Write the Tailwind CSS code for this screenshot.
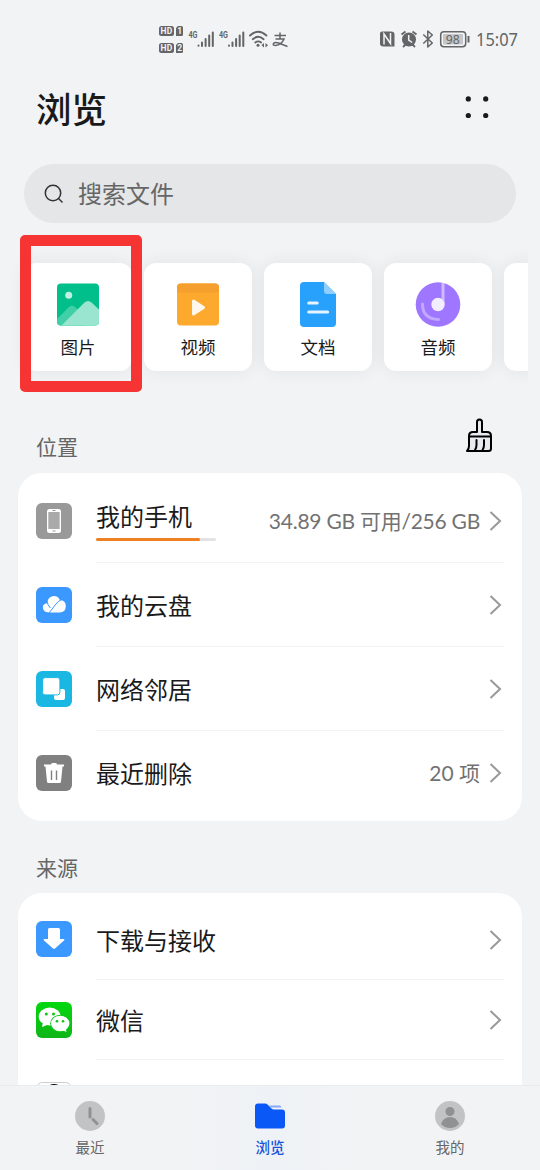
<!DOCTYPE html>
<html lang="zh-CN">
<head>
<meta charset="utf-8">
<title>浏览</title>
<script src="https://cdn.jsdelivr.net/npm/@tailwindcss/browser@4"></script>
</head>
<body class="bg-[#f1f3f5] text-[#1a1a1a] font-['Noto_Sans_CJK_SC',sans-serif]">
<div class="relative flex h-[1170px] w-[540px] flex-col overflow-hidden">

  <!-- Status bar -->
  <div class="flex h-20 shrink-0 justify-between text-[#636567]">
    <svg class="ml-[150px] mt-[15px]" width="150" height="50" viewBox="0 0 150 50" fill="none" stroke="#636567" font-family="Roboto, sans-serif" font-weight="700">
      <g fill="#636567" stroke="none">
        <rect x="9" y="11" width="15" height="10" rx="2.5"/><path d="M28 11h3.500q1.500 0 1.500 1.500v7q0 1.500-1.500 1.500H26v-8z"/>
        <rect x="9" y="28" width="15" height="10" rx="2.5"/><path d="M28 28h3.500q1.500 0 1.500 1.500v7q0 1.500-1.500 1.500H26v-8z"/>
        <g fill="#f1f3f5" font-size="8.5"><text x="10.4" y="19.2" textLength="12">HD</text><text x="27.2" y="19" font-size="8.500">1</text><text x="10.4" y="36.2" textLength="12">HD</text><text x="27.2" y="36" font-size="8.500">2</text></g>
        <g font-size="8.5"><text x="38.5" y="23" textLength="9" lengthAdjust="spacingAndGlyphs">4G</text><text x="69" y="23" textLength="9" lengthAdjust="spacingAndGlyphs">4G</text></g>
      </g>
      <g stroke-width="2" stroke-linecap="round">
        <path d="M48.5 30.5v.3M52 27.5v3.5M55.600 24v7M59.200 20.500v10.500M62.800 17.500v13.500"/>
        <path d="M79 30.500v.3M82.500 27.500v3.500M86.100 24v7M89.700 20.500v10.500M93.300 17.500v13.500"/>
        <path d="M100 20.500q8.200-7.500 16.400 0M102.800 24.200q5.400-4.800 10.800 0M105.300 27.500q2.900-2.200 5.800 0" stroke-width="1.900"/>
      </g>
      <g fill="#636567" stroke="none"><circle cx="108" cy="30.300" r="1.500"/><path d="M114 28v4.500l-2.500-2.200zM115.500 28v4.500l2.500-2.200z"/></g>
      <path d="M124.500 20.500h11.500M130 17.500v6M125.500 24h8.500q-2.500 6-8.500 6.500-3 0-2-2 1.500-1.800 5-.5l9 3.500" stroke-width="1.500"/>
    </svg>
    <svg class="mt-[15px]" width="170" height="50" viewBox="0 0 170 50" fill="none" stroke="#636567" font-family="Noto Sans, sans-serif">
      <path d="M12 16.500h9q3.500 0 3.500 3v12h-11q-3.500 0-3.500-3v-10q0-2 2-2z" fill="#636567" stroke="none"/>
      <path d="M14 29.500v-10.500l6.500 9.500v-10.500" stroke="#f1f3f5" stroke-width="1.500"/>
      <circle cx="39" cy="24.500" r="7" fill="#636567" stroke="none"/>
      <path d="M31.500 19.500l4-3M46.500 19.500l-4-3M33 32l2.500-2.500M45 32l-2.500-2.500" stroke-width="1.800"/>
      <path d="M38.700 20v5l3.500 2.500" stroke="#f1f3f5" stroke-width="1.500"/>
      <path d="M53.300 19.500l9 8.500-4.500 4v-16l4.500 4-9 8.500" stroke-width="1.500" stroke-linejoin="round"/>
      <rect x="70.700" y="16.700" width="25" height="15" rx="3.200" stroke-width="1.500"/>
      <rect x="73" y="19" width="20" height="10.500" rx="1" fill="#c5c6c8" stroke="none"/>
      <path d="M98.500 21v6.500" stroke-width="2"/>
      <g fill="#636567" stroke="none"><text x="75.800" y="28.700" font-size="12.500" textLength="14" lengthAdjust="spacingAndGlyphs">98</text>
      <text x="106" y="31.300" font-size="17.500" textLength="42" lengthAdjust="spacingAndGlyphs">15:07</text></g>
    </svg>
  </div>

  <!-- Title -->
  <header class="flex h-[58px] shrink-0 items-center justify-between pl-9 pr-[50px]">
    <h1 class="-mt-[3px] text-[35.500px] leading-[58px] font-medium">浏览</h1>
    <svg class="-mt-[5px]" width="26" height="26" viewBox="0 0 26 26" fill="#1a1a1a"><circle cx="4.300" cy="4.900" r="2.600"/><circle cx="21.700" cy="4.900" r="2.600"/><circle cx="4.300" cy="21.500" r="2.600"/><circle cx="21.700" cy="21.500" r="2.600"/></svg>
  </header>

  <!-- Search -->
  <div class="mx-6 mt-[26px] flex h-[59px] shrink-0 items-center rounded-full bg-[#e5e6e8] pl-5">
    <svg width="20" height="20" viewBox="0 0 20 20" fill="none" stroke="#333" stroke-width="1.500"><circle cx="9" cy="9" r="7.700"/><path d="M14.500 14.500l4 4"/></svg>
    <span class="-mt-0.5 ml-3.5 text-2xl text-[#666]">搜索文件</span>
  </div>

  <!-- Categories -->
  <div class="mr-3 flex h-[170px] shrink-0 gap-3 overflow-hidden pl-6 pt-10">
    <div class="flex h-[108px] w-[108px] shrink-0 flex-col items-center rounded-xl bg-white pt-[18px] shadow-[0_0_18px_rgba(0,0,0,0.07)]">
      <svg width="48" height="48" viewBox="0 0 48 48"><defs><clipPath id="ph"><rect x="3" y="2.500" width="42" height="42" rx="4"/></clipPath></defs><g clip-path="url(#ph)"><path d="M3 2h42v43H3z" fill="#00bf8a"/><path d="M3 38l12-12q3-2.500 6 0l10 10v9H3z" fill="#40cfa7"/><path d="M7 45l23.500-23.500q3.500-3 7 0L45 28.500V45z" fill="#99e5d0"/><circle cx="14.700" cy="14.300" r="3.500" fill="#bff0e2"/></g></svg>
      <span class="mt-[5px] text-[17.500px] leading-[26px]">图片</span>
    </div>
    <div class="flex h-[108px] w-[108px] shrink-0 flex-col items-center rounded-xl bg-white pt-[18px] shadow-[0_0_18px_rgba(0,0,0,0.07)]">
      <svg width="48" height="48" viewBox="0 0 48 48"><rect x="3" y="2.500" width="42" height="42" rx="4" fill="#fca92e"/><path d="M3 11.500v-5q0-4 4-4h34q4 0 4 4v5z" fill="#f59f2e"/><path d="M19.500 20v13l10-6.500z" fill="#fff7eb" stroke="#fff7eb" stroke-width="3" stroke-linejoin="round"/></svg>
      <span class="mt-[5px] text-[17.500px] leading-[26px]">视频</span>
    </div>
    <div class="flex h-[108px] w-[108px] shrink-0 flex-col items-center rounded-xl bg-white pt-[18px] shadow-[0_0_18px_rgba(0,0,0,0.07)]">
      <svg width="48" height="48" viewBox="0 0 48 48"><path d="M10 1h20l12 12v29q0 4-4 4H10q-4 0-4-4V5q0-4 4-4z" fill="#28a1fd"/><path d="M30 1l12 12h-9q-3 0-3-3z" fill="#8fcefe"/><path d="M14.700 22h8.500M14.700 31h19" stroke="#e5f4ff" stroke-width="3" stroke-linecap="round"/></svg>
      <span class="mt-[5px] text-[17.500px] leading-[26px]">文档</span>
    </div>
    <div class="flex h-[108px] w-[108px] shrink-0 flex-col items-center rounded-xl bg-white pt-[18px] shadow-[0_0_18px_rgba(0,0,0,0.07)]">
      <svg width="48" height="48" viewBox="0 0 48 48" fill="none"><circle cx="24" cy="23.500" r="22.300" fill="#9e76ff"/><path d="M29 2v21" stroke="#cebaff" stroke-width="3"/><circle cx="24" cy="23.500" r="6.700" fill="#f2edff"/><path d="M8.500 23q0 15 16 15.500" stroke="#c2a9ff" stroke-width="3" stroke-linecap="round"/></svg>
      <span class="mt-[5px] text-[17.500px] leading-[26px]">音频</span>
    </div>
    <div class="h-[108px] w-[108px] shrink-0 rounded-xl bg-white shadow-[0_0_18px_rgba(0,0,0,0.07)]"></div>
  </div>
  <div class="absolute left-5 top-[235px] h-[157px] w-[122px] rounded-[5px] border-[11px] border-[#f73434]"></div>

  <!-- Locations -->
  <div class="flex h-20 shrink-0 items-start justify-between pl-9 pr-[47px] pt-[25px]">
    <h2 class="mt-3 text-[21px] leading-8 text-[#666]">位置</h2>
    <svg width="28" height="36" viewBox="0 0 28 36" fill="none" stroke="#000" stroke-width="2" stroke-linejoin="round" stroke-linecap="round"><path d="M12 14V4q0-2.500 2.500-2.500t2.500 2.500v10h5q4 0 4 4v12.500q0 2.500-2.500 2.500H2q2-2 2-5v-10q0-4 4-4h4M4 18.500h22M11.500 22v5q0 3-1.500 5M19 22v5q0 3-1.500 5" fill="#e9eaf0"/></svg>
  </div>
  <section class="mx-[18px] flex shrink-0 flex-col rounded-3xl bg-white px-[18px] py-1.5">
    <div class="flex h-[84px]">
      <svg class="mt-6" width="36" height="36" viewBox="0 0 36 36"><rect width="36" height="36" rx="6" fill="#999"/><rect x="11" y="6" width="14" height="24" rx="2.500" fill="#fff"/><path d="M12.300 9h11.400v17H12.300z" fill="#aaa"/><path d="M16.500 7.500h3M16.500 28h3" stroke="#999"/></svg>
      <div class="ml-6 flex grow border-b border-[#f3f3f3]">
        <div class="pt-5"><p class="-mt-px text-2xl leading-9">我的手机</p><div class="mt-[3.500px] h-[3px] w-[120px] rounded-full bg-[#e3e3e5]"><div class="h-full w-[104px] rounded-full bg-[#f08122]"></div></div></div>
        <span class="ml-auto mt-6 h-9 text-[21px] leading-9 tracking-[-0.25px] text-[#727272] font-[Lato,'Noto_Sans_CJK_SC',sans-serif]">34.89 GB 可用/256 GB</span>
        <svg class="ml-[9px] mr-0.5 mt-8" width="13" height="20" viewBox="0 0 13 20" fill="none" stroke="#999" stroke-width="2"><path d="M1.500 1l9.500 9-9.500 9"/></svg>
      </div>
    </div>
    <div class="flex h-[84px]">
      <svg class="mt-6" width="36" height="36" viewBox="0 0 36 36"><rect width="36" height="36" rx="6" fill="#3a98ff"/><path d="M11.300 16q.5-6.500 6.500-7 4.500 0 6 4 6 .5 6 6 0 6-6 6.500h-11q-6-.5-6-5.500 0-3 4.500-4z" fill="#fff"/><path d="M11 14.500q.5 3.500 3.500 6.500M13 26l7-9q2-3 5-4" stroke="#3a98ff" stroke-width="1" fill="none"/></svg>
      <div class="ml-6 flex grow items-center border-b border-[#f3f3f3]"><span class="text-2xl">我的云盘</span><svg class="ml-auto mr-0.5" width="13" height="20" viewBox="0 0 13 20" fill="none" stroke="#999" stroke-width="2"><path d="M1.500 1l9.500 9-9.500 9"/></svg></div>
    </div>
    <div class="flex h-[84px]">
      <svg class="mt-6" width="36" height="36" viewBox="0 0 36 36"><rect width="36" height="36" rx="6" fill="#1bb7e3"/><rect x="18" y="18" width="11" height="11" rx="2" fill="#fff"/><rect x="6.600" y="6.600" width="17.300" height="17.300" rx="2.500" fill="#fff" stroke="#1bb7e3"/></svg>
      <div class="ml-6 flex grow items-center border-b border-[#f3f3f3]"><span class="text-2xl">网络邻居</span><svg class="ml-auto mr-0.5" width="13" height="20" viewBox="0 0 13 20" fill="none" stroke="#999" stroke-width="2"><path d="M1.500 1l9.500 9-9.500 9"/></svg></div>
    </div>
    <div class="flex h-[84px]">
      <svg class="mt-6" width="36" height="36" viewBox="0 0 36 36"><rect width="36" height="36" rx="6" fill="#808080"/><path d="M8 9.500h7q0-1.500 1.500-1.500h3q1.500 0 1.500 1.500h7v2h-1.500l-1.500 15q0 1.500-1.500 1.500h-11q-1.500 0-1.500-1.500l-1.500-15H8z" fill="#fff"/><path d="M15.500 15.500v9.500M20.500 15.500v9.500" stroke="#808080" stroke-width="1.400"/></svg>
      <div class="ml-6 flex grow items-center"><span class="text-2xl">最近删除</span><span class="ml-auto text-[21px] text-[#727272] font-[Lato,'Noto_Sans_CJK_SC',sans-serif]">20 项</span><svg class="ml-[9px] mr-0.5" width="13" height="20" viewBox="0 0 13 20" fill="none" stroke="#999" stroke-width="2"><path d="M1.500 1l9.500 9-9.500 9"/></svg></div>
    </div>
  </section>

  <!-- Sources -->
  <h2 class="h-[72px] shrink-0 pl-9 pt-[30px] text-[21px] leading-8 text-[#666]">来源</h2>
  <section class="mx-[18px] flex h-[300px] shrink-0 flex-col rounded-3xl bg-white px-[18px] pt-[7px]">
    <div class="flex h-20">
      <svg class="mt-[21px]" width="36" height="36" viewBox="0 0 36 36"><rect width="36" height="36" rx="6" fill="#3a98ff"/><path d="M13.500 7h9q1.500 0 1.500 1.500V18h4q1 .5 0 1.500l-9 8q-1 .8-2 0l-9-8q-1-1 0-1.500h4V8.500Q12 7 13.500 7z" fill="#fff"/></svg>
      <div class="ml-6 flex grow items-center border-b border-[#f3f3f3]"><span class="text-2xl">下载与接收</span><svg class="ml-auto mr-0.5" width="13" height="20" viewBox="0 0 13 20" fill="none" stroke="#999" stroke-width="2"><path d="M1.500 1l9.500 9-9.500 9"/></svg></div>
    </div>
    <div class="flex h-20">
      <svg class="mt-[21.500px]" width="36" height="36" viewBox="0 0 36 36"><defs><linearGradient id="wx" x2="0" y2="1"><stop stop-color="#02d80d"/><stop offset="1" stop-color="#10b518"/></linearGradient></defs><rect width="36" height="36" rx="6" fill="url(#wx)"/><path d="M7 20l-1 5 5-2z" fill="#fff"/><ellipse cx="13.700" cy="14.500" rx="11" ry="9" fill="#fff"/><ellipse cx="24.200" cy="21.500" rx="10" ry="8.700" fill="#0cc714"/><path d="M26 28l4.500 2-1-4z" fill="#fff"/><ellipse cx="24.200" cy="21.500" rx="9.200" ry="7.800" fill="#fff"/><g fill="#0cc714"><circle cx="10.300" cy="12" r="1.500"/><circle cx="17.500" cy="12" r="1.500"/><circle cx="21" cy="19.300" r="1.300"/><circle cx="27" cy="19.300" r="1.300"/></g></svg>
      <div class="ml-6 flex grow items-center border-b border-[#f3f3f3]"><span class="text-2xl">微信</span><svg class="ml-auto mr-0.5" width="13" height="20" viewBox="0 0 13 20" fill="none" stroke="#999" stroke-width="2"><path d="M1.500 1l9.500 9-9.500 9"/></svg></div>
    </div>
    <svg class="mt-[22px] shrink-0" width="36" height="36" viewBox="0 0 36 36"><rect x=".5" y=".5" width="35" height="35" rx="6" fill="#fff" stroke="#ccc"/><ellipse cx="18" cy="10.500" rx="8.500" ry="8.500"/></svg>
  </section>

  <!-- Tab bar -->
  <nav class="absolute inset-x-0 bottom-0 grid h-[85px] grid-cols-3 border-t border-[#e9ebed] bg-[#f2f3f5] text-[14.500px] leading-6 text-[#666]">
    <div class="flex flex-col items-center pt-3.5"><svg width="32" height="32" viewBox="0 0 32 32"><circle cx="16" cy="16" r="15" fill="#c2c3c5"/><path d="M16 8.500v8.500M19 19.500l4 4" stroke="#909193" stroke-width="3" stroke-linecap="round"/></svg><span class="mt-[3px]">最近</span></div>
    <div class="flex flex-col items-center bg-linear-to-r from-[#f2f3f5] via-[#eef2f6] to-[#f2f3f5] pt-3.5 font-medium text-[#1753dc]"><svg width="32" height="32" viewBox="0 0 32 32"><path d="M15 5.500h10.500q1.500 0 2 2H17z" fill="#85a9f8"/><path d="M4 3.500h7q1.500 0 2.500 1l4 4q1 1 2.500 1h8q3 0 3 3v13q0 3-3 3H4q-3 0-3-3v-19q0-3 3-3z" fill="#0a59f7"/></svg><span class="mt-[3px]">浏览</span></div>
    <div class="flex flex-col items-center pt-3.5"><svg width="32" height="32" viewBox="0 0 32 32"><circle cx="16" cy="16" r="15" fill="#c2c3c5"/><g fill="#909193"><circle cx="16" cy="11.500" r="4.500"/><path d="M7 24q2.500-7 9-7t9 7q-3.500 4-9 4t-9-4z"/></g></svg><span class="mt-[3px]">我的</span></div>
  </nav>
</div>
</body>
</html>
